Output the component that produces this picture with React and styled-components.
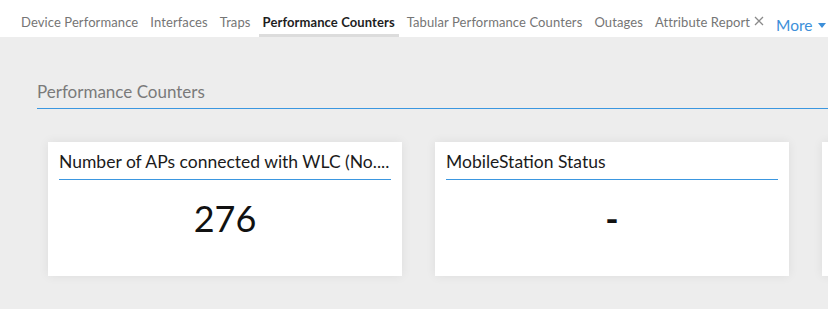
import React from "react";
import styled, { createGlobalStyle } from "styled-components";

const Global = createGlobalStyle`
  html, body { margin: 0; padding: 0; background: #ededed; }
  body { font-family: Lato, "Open Sans", sans-serif; overflow: hidden; }
  * { box-sizing: border-box; }
`;

const Page = styled.div`
  width: 828px;
  height: 309px;
  background: #ededed;
  overflow: hidden;
`;

const Nav = styled.nav`
  height: 37px;
  background: #fff;
  display: flex;
  align-items: flex-end;
  padding-left: 17px;
  gap: 4px;
  white-space: nowrap;
`;

const Tab = styled.div`
  height: 37px;
  display: flex;
  align-items: center;
  padding: 10px 4px 0;
  font-size: 13px;
  letter-spacing: 0.1px;
  color: ${(p) => (p.$active ? "#1e1e1e" : "#757575")};
  font-weight: ${(p) => (p.$active ? 700 : 400)};
  border-bottom: 3px solid ${(p) => (p.$active ? "#dcdcdc" : "transparent")};
`;

const Close = styled.svg`
  margin-left: 4px;
  width: 10px;
  height: 10px;
  margin-top: -3px;
`;

const More = styled.div`
  height: 37px;
  display: flex;
  align-items: center;
  padding: 12px 0 0 4px;
  font-size: 15.5px;
  color: #3d8fd9;
  gap: 5px;
`;

const Caret = styled.span`
  width: 0;
  height: 0;
  border-left: 4px solid transparent;
  border-right: 4px solid transparent;
  border-top: 5px solid #3d8fd9;
  margin-top: 1px;
`;

const Content = styled.main`
  padding: 43px 0 0 37px;
`;

const SectionTitle = styled.h2`
  margin: 0;
  font-size: 17px;
  font-weight: 400;
  color: #7a7a7a;
  line-height: 24px;
  padding-bottom: 4px;
  border-bottom: 1px solid #3b97e0;
`;

const Cards = styled.div`
  display: flex;
  gap: 33px;
  margin: 33px 0 0 11px;
`;

const Card = styled.section`
  flex: 0 0 354px;
  width: 354px;
  min-width: 0;
  height: 134px;
  background: #fff;
  padding: 0 11px;
  box-shadow: 0 0 10px rgba(0, 0, 0, 0.07);
`;

const CardTitle = styled.h3`
  margin: 0;
  font-size: 17.5px;
  font-weight: 400;
  color: #1b1b1b;
  line-height: 24px;
  padding-top: 8px;
  padding-bottom: 5px;
  border-bottom: 1px solid #3b97e0;
  white-space: nowrap;
  overflow: hidden;
  text-overflow: ellipsis;
`;

const Value = styled.div`
  text-align: center;
  font-size: 36px;
  line-height: 44px;
  color: #111;
  padding-top: 16px;
  font-weight: ${(p) => (p.$dash ? 700 : 400)};
`;

const tabs = [
  "Device Performance",
  "Interfaces",
  "Traps",
  "Performance Counters",
  "Tabular Performance Counters",
  "Outages",
  "Attribute Report",
];

export default function App() {
  return (
    <Page>
      <Global />
      <Nav>
        {tabs.map((t) => (
          <Tab key={t} $active={t === "Performance Counters"}>
            {t}
            {t === "Attribute Report" && (
              <Close viewBox="0 0 10 10">
                <path d="M1 1 L9 9 M9 1 L1 9" stroke="#8a8a8a" strokeWidth="1.3" fill="none" />
              </Close>
            )}
          </Tab>
        ))}
        <More>
          More
          <Caret />
        </More>
      </Nav>
      <Content>
        <SectionTitle>Performance Counters</SectionTitle>
        <Cards>
          <Card>
            <CardTitle>Number of APs connected with WLC (No....</CardTitle>
            <Value>276</Value>
          </Card>
          <Card>
            <CardTitle>MobileStation Status</CardTitle>
            <Value $dash>-</Value>
          </Card>
          <Card>
            <CardTitle>&nbsp;</CardTitle>
          </Card>
        </Cards>
      </Content>
    </Page>
  );
}
